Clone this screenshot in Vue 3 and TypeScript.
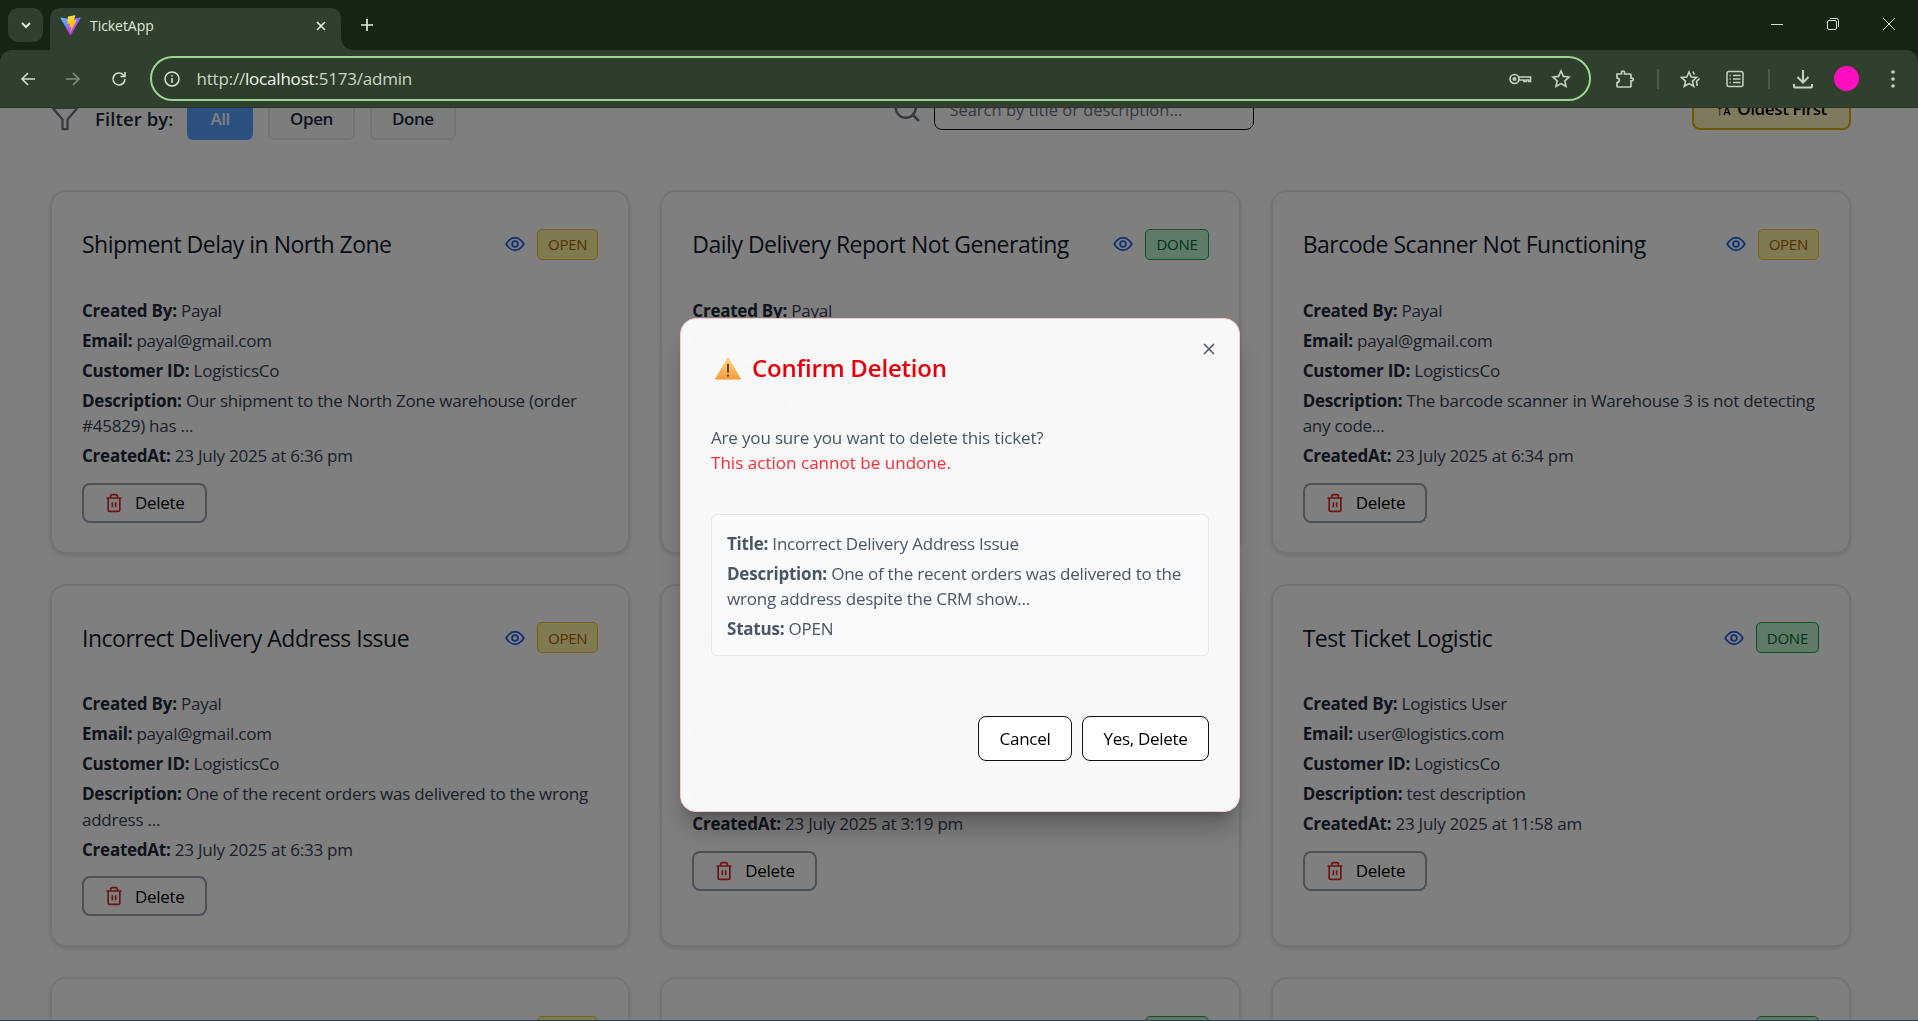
<template>
  <div class="window">
    <header class="chrome">
      <div class="tabstrip">
        <button class="tab-list">
          <svg width="14" height="14" viewBox="0 0 14 14"><path d="M3 5l4 4 4-4" fill="none" stroke="#dfe9da" stroke-width="2" /></svg>
        </button>
        <div class="tab">
          <svg class="favicon" width="21" height="21" viewBox="0 0 410 404">
            <defs>
              <linearGradient id="va" x1="6" y1="33" x2="235" y2="344" gradientUnits="userSpaceOnUse"><stop stop-color="#41D1FF" /><stop offset="1" stop-color="#BD34FE" /></linearGradient>
              <linearGradient id="vb" x1="194" y1="8" x2="236" y2="293" gradientUnits="userSpaceOnUse"><stop stop-color="#FFEA83" /><stop offset=".08" stop-color="#FFDD35" /><stop offset="1" stop-color="#FFA800" /></linearGradient>
            </defs>
            <path d="M399.641 59.5246L215.643 388.545C211.844 395.338 202.084 395.378 198.228 388.618L10.5817 59.5563C6.38087 52.1896 12.6802 43.2665 21.0281 44.7586L205.223 77.6824C206.398 77.8924 207.601 77.8904 208.776 77.6763L389.119 44.8058C397.439 43.2894 403.768 52.1434 399.641 59.5246Z" fill="url(#va)" />
            <path d="M292.965 1.5744L156.801 28.2552C154.563 28.6937 152.906 30.5903 152.771 32.8664L144.395 174.33C144.198 177.662 147.258 180.248 150.51 179.498L188.42 170.749C191.967 169.931 195.172 173.055 194.443 176.622L183.18 231.775C182.422 235.487 185.907 238.661 189.532 237.56L212.947 230.446C216.577 229.344 220.065 232.527 219.297 236.242L201.398 322.875C200.278 328.294 207.486 331.249 210.492 326.603L212.5 323.5L323.454 102.072C325.312 98.3645 322.108 94.137 318.036 94.9228L279.014 102.454C275.347 103.161 272.227 99.746 273.262 96.1583L298.731 7.86689C299.767 4.27314 296.636 0.855181 292.965 1.5744Z" fill="url(#vb)" />
          </svg>
          <span class="tab-title">TicketApp</span>
          <svg class="tab-x" width="12" height="12" viewBox="0 0 12 12"><path d="M2 2l8 8M10 2l-8 8" stroke="#eef3ea" stroke-width="1.6" /></svg>
        </div>
        <svg class="tab-plus" width="14" height="14" viewBox="0 0 14 14"><path d="M7 1v12M1 7h12" stroke="#dfe9da" stroke-width="1.7" /></svg>
        <div class="win-controls">
          <svg width="14" height="14" viewBox="0 0 14 14"><path d="M1 7.5h12" stroke="#d5dfd0" stroke-width="1" /></svg>
          <svg width="14" height="14" viewBox="0 0 14 14" fill="none" stroke="#d5dfd0"><rect x="1.5" y="3.5" width="9" height="9" rx="1.5" /><path d="M4 1.5h6.5a2 2 0 0 1 2 2V10" /></svg>
          <svg width="14" height="14" viewBox="0 0 14 14"><path d="M1 1l12 12M13 1L1 13" stroke="#d5dfd0" stroke-width="1" /></svg>
        </div>
      </div>
      <div class="toolbar">
        <div class="nav-btn"><svg width="18" height="18" viewBox="0 0 18 18" fill="none" stroke="#d3dfce" stroke-width="1.6"><path d="M16 9H3M9 3L3 9l6 6" /></svg></div>
        <div class="nav-btn"><svg width="18" height="18" viewBox="0 0 18 18" fill="none" stroke="#7f8d7b" stroke-width="1.6"><path d="M2 9h13M9 3l6 6-6 6" /></svg></div>
        <div class="nav-btn"><svg width="18" height="18" viewBox="0 0 18 18" fill="none" stroke="#d3dfce" stroke-width="1.6"><path d="M15 9a6 6 0 1 1-1.8-4.3L15 6.5" /><path d="M15 2v4.5h-4.5" /></svg></div>
        <div class="address">
          <svg width="18" height="18" viewBox="0 0 18 18" fill="none" stroke="#dfe9da" stroke-width="1.5"><circle cx="9" cy="9" r="7" /><path d="M9 8v5" /><path d="M9 5v1.4" /></svg>
          <span class="url"><span class="url-dim">http://</span>localhost<span class="url-dim">:5173/admin</span></span>
          <svg class="addr-key" width="24" height="18" viewBox="0 0 24 18" fill="none" stroke="#c5d2c0" stroke-width="1.7"><circle cx="6.5" cy="9" r="4.5" /><circle cx="6.5" cy="9" r="1.2" /><path d="M11 7h11.5v4.5h-2V10h-2.5v1.5h-2V10H11" /></svg>
          <svg class="addr-star" width="20" height="20" viewBox="0 0 20 20" fill="none" stroke="#c5d2c0" stroke-width="1.6"><path d="M10 2l2.4 5.4 5.6.6-4.2 3.8 1.2 5.7L10 14.6l-5 2.9 1.2-5.7L2 8l5.6-.6z" /></svg>
        </div>
        <div class="tool"><svg width="20" height="20" viewBox="0 0 20 20" fill="none" stroke="#c5d2c0" stroke-width="1.7"><path d="M2 5h4.5V3.5a1.5 1.5 0 0 1 3 0V5H15a1 1 0 0 1 1 1v3.2h1a1.3 1.3 0 0 1 0 2.6h-1V17a1 1 0 0 1-1 1H3a1 1 0 0 1-1-1v-3.5c3 0 3-4.5 0-4.5z" /></svg></div>
        <i class="sep"></i>
        <div class="tool"><svg width="22" height="20" viewBox="0 0 22 20" fill="none" stroke="#c5d2c0" stroke-width="1.6"><path d="M9 3l2.2 5 5.3.5-4 3.6 1.2 5.2L9 14.6l-4.7 2.7 1.2-5.2-4-3.6L6.800 8z" /><path d="M13 2.500l1.300 3M19.500 9.500l-3 3 .8 4.500" /></svg></div>
        <div class="tool"><svg width="18" height="18" viewBox="0 0 18 18" fill="none" stroke="#c5d2c0" stroke-width="1.5"><rect x="1" y="1.500" width="16" height="15" rx="2" /><path d="M7 5.500h7.500M7 9h7.500M7 12.500h7.500M3.500 5.500h1.200M3.500 9h1.200M3.500 12.500h1.200" /></svg></div>
        <i class="sep sep-wide"></i>
        <div class="tool"><svg width="22" height="22" viewBox="0 0 22 22" fill="none" stroke="#c5d2c0" stroke-width="2"><path d="M11 2v12M5.500 9l5.500 5.500L16.500 9" /><path d="M2 16v2.500a1 1 0 0 0 1 1h16a1 1 0 0 0 1-1V16" /></svg></div>
        <div class="tool"><span class="avatar"></span></div>
        <div class="tool tool-last"><svg width="6" height="20" viewBox="0 0 6 20" fill="#c5d2c0"><circle cx="3" cy="3" r="1.800" /><circle cx="3" cy="10" r="1.800" /><circle cx="3" cy="17" r="1.800" /></svg></div>
      </div>
    </header>

    <main class="viewport">
      <div class="page">
        <div class="controls">
          <div class="filters">
            <svg class="funnel" width="30" height="30" viewBox="0 0 24 24" fill="none" stroke="#6b7280" stroke-width="1.800" stroke-linejoin="round" stroke-linecap="round"><polygon points="22 3 2 3 10 12.46 10 20 14 20 14 12.46 22 3" /></svg>
            <span class="filter-label">Filter by:</span>
            <button v-for="f in filters" :key="f" class="filter-btn" :class="{ active: f === 'All' }">{{ f }}</button>
          </div>
          <div class="search">
            <svg width="30" height="30" viewBox="0 0 24 24" fill="none" stroke="#6b7280" stroke-width="2" stroke-linecap="round"><circle cx="11" cy="11" r="8" /><path d="M21 21l-4.300-4.300" /></svg>
            <input class="search-input" placeholder="Search by title or description..." />
          </div>
          <button class="sort-btn"><span class="sort-ico">↑<small>A</small></span> Oldest First</button>
        </div>

        <section class="grid">
          <article v-for="t in tickets" :key="t.title" class="card">
            <div class="card-head">
              <h3>{{ t.title }}</h3>
              <div class="card-meta">
                <svg width="20" height="20" viewBox="0 0 24 24" fill="none" stroke="#2563eb" stroke-width="2.200"><path d="M1.500 12S5.500 4.500 12 4.500 22.500 12 22.500 12 18.500 19.500 12 19.500 1.500 12 1.500 12z" /><circle cx="12" cy="12" r="3.500" /></svg>
                <span class="badge" :class="t.status.toLowerCase()">{{ t.status }}</span>
              </div>
            </div>
            <p><b>Created By:</b> {{ t.by }}</p>
            <p><b>Email:</b> {{ t.email }}</p>
            <p><b>Customer ID:</b> {{ t.customer }}</p>
            <p><b>Description:</b> {{ t.desc }}</p>
            <p><b>CreatedAt:</b> {{ t.at }}</p>
            <button class="del-btn">
              <svg width="20" height="20" viewBox="0 0 24 24" fill="none" stroke="#dc2626" stroke-width="2"><path d="M3 6h18M19 6v14a2 2 0 0 1-2 2H7a2 2 0 0 1-2-2V6m3 0V4a2 2 0 0 1 2-2h4a2 2 0 0 1 2 2v2M10 11v6M14 11v6" /></svg>
              Delete
            </button>
          </article>
        </section>
      </div>

      <div class="overlay">
        <div class="modal">
          <svg class="modal-x" width="12" height="12" viewBox="0 0 12 12"><path d="M1 1l10 10M11 1L1 11" stroke="#4a5565" stroke-width="1.500" /></svg>
          <h2 class="modal-title">
            <svg width="26" height="24" viewBox="0 0 26 24">
              <defs><linearGradient id="warn" x1="0" y1="0" x2="0" y2="1"><stop offset="0" stop-color="#ffd98a" /><stop offset="1" stop-color="#f79a3a" /></linearGradient></defs>
              <path d="M13 1.500 25.500 23H.5z" fill="url(#warn)" stroke="url(#warn)" stroke-linejoin="round" />
              <path d="M13 8v8.500M13 18.500v2" stroke="#4b3a2a" stroke-width="1.800" />
            </svg>
            Confirm Deletion
          </h2>
          <p class="modal-text">Are you sure you want to delete this ticket?</p>
          <p class="modal-warn">This action cannot be undone.</p>
          <div class="summary">
            <p><b>Title:</b> Incorrect Delivery Address Issue</p>
            <p><b>Description:</b> One of the recent orders was delivered to the wrong address despite the CRM show...</p>
            <p><b>Status:</b> OPEN</p>
          </div>
          <div class="modal-actions">
            <button class="cancel">Cancel</button>
            <button class="confirm">Yes, Delete</button>
          </div>
        </div>
      </div>
    </main>
    <div class="taskbar-edge"></div>
  </div>
</template>

<script setup lang="ts">
type Ticket = { title: string; status: 'OPEN' | 'DONE'; by: string; email: string; customer: string; desc: string; at: string };

const filters = ['All', 'Open', 'Done'];

const payal = { by: 'Payal', email: 'payal@gmail.com', customer: 'LogisticsCo' };

const tickets: Ticket[] = [
  { title: 'Shipment Delay in North Zone', status: 'OPEN', ...payal, desc: 'Our shipment to the North Zone warehouse (order #45829) has ...', at: '23 July 2025 at 6:36 pm' },
  { title: 'Daily Delivery Report Not Generating', status: 'DONE', ...payal, desc: 'The daily delivery report has not been generated since the last ...', at: '23 July 2025 at 6:35 pm' },
  { title: 'Barcode Scanner Not Functioning', status: 'OPEN', ...payal, desc: 'The barcode scanner in Warehouse 3 is not detecting any code...', at: '23 July 2025 at 6:34 pm' },
  { title: 'Incorrect Delivery Address Issue', status: 'OPEN', ...payal, desc: 'One of the recent orders was delivered to the wrong address ...', at: '23 July 2025 at 6:33 pm' },
  { title: 'Logistics Ticket', status: 'DONE', by: 'Logistics User', email: 'user@logistics.com', customer: 'LogisticsCo', desc: 'test ticket', at: '23 July 2025 at 3:19 pm' },
  { title: 'Test Ticket Logistic', status: 'DONE', by: 'Logistics User', email: 'user@logistics.com', customer: 'LogisticsCo', desc: 'test description', at: '23 July 2025 at 11:58 am' },
  { title: 'Ticket 7', status: 'OPEN', ...payal, desc: 'test', at: '22 July 2025 at 6:30 pm' },
  { title: 'Ticket 8', status: 'DONE', ...payal, desc: 'test', at: '22 July 2025 at 6:20 pm' },
  { title: 'Ticket 9', status: 'DONE', ...payal, desc: 'test', at: '22 July 2025 at 6:10 pm' },
];
</script>

<style>
html, body { margin: 0; height: 100%; overflow: hidden; }
</style>

<style scoped>
* { box-sizing: border-box; }
.window { width: 1918px; height: 1021px; display: flex; flex-direction: column; overflow: hidden; font-family: "Open Sans", "Noto Sans", sans-serif; background: #fff; position: relative; }
button { font-family: inherit; cursor: pointer; }
p { margin: 0; }

.chrome { flex: none; background: #162413; position: relative; z-index: 5; }
.tabstrip { height: 50px; display: flex; align-items: flex-start; padding: 8px 0 0 8px; }
.tab-list { width: 35px; height: 34px; border: 0; border-radius: 10px; background: #313f2f; display: flex; align-items: center; justify-content: center; padding: 0; }
.tab { width: 291px; height: 42px; margin-left: 7px; background: #313f2f; border-radius: 10px 10px 0 0; display: flex; align-items: center; padding: 0 14px 7px 10px; position: relative; }
.tab::after { content: ""; position: absolute; right: -12px; bottom: 0; width: 12px; height: 12px; background: radial-gradient(circle at 100% 0, #162413 11.500px, #313f2f 12px); }
.favicon { flex: none; }
.tab-title { margin-left: 9px; flex: 1; color: #dfe9da; font-size: 14px; letter-spacing: -0.05px; }
.tab-plus { margin: 10px 0 0 19px; }
.win-controls { margin-left: auto; display: flex; gap: 42px; padding: 9px 22px 0 0; }
.toolbar { height: 58px; background: #313f2f; border-radius: 12px 12px 0 0; display: flex; align-items: center; padding: 0 3px 0 5px; border-bottom: 1px solid #2b3829; }
.nav-btn { width: 45.500px; display: flex; justify-content: center; flex: none; }
.address { flex: 1; height: 45px; margin: 0 11.500px 0 8px; border: 2.500px solid #9dd58f; border-radius: 23px; background: #2f3d2d; display: flex; align-items: center; padding: 0 18px 0 11px; }
.url { margin-left: 16px; flex: 1; color: #f1f6ee; font-size: 17px; letter-spacing: -0.2px; }
.url-dim { color: #c9d6c4; }
.addr-key { margin-right: 19px; }
.tool { width: 44px; flex: none; display: flex; justify-content: center; align-items: center; }
.tool-last { margin-left: 2.500px; }
.sep { width: 2px; height: 20px; background: #4b5a48; margin: 0 10px; flex: none; }
.sep-wide { margin: 0 11px; }
.avatar { width: 25px; height: 25px; border-radius: 50%; background: #ff0fbf; }

.viewport { flex: 1; min-height: 0; position: relative; overflow: hidden; }
.page { margin-top: -18px; padding: 0 67px 0 50px; color: #1f2937; }
.controls { display: flex; justify-content: space-between; align-items: flex-start; height: 50px; margin-bottom: 50px; }
.filters { display: flex; align-items: center; padding-top: 8px; }
.funnel { margin-right: 15px; }
.filter-label { font-size: 18.500px; font-weight: 600; color: #1e2939; letter-spacing: 0.1px; margin-right: 14px; position: relative; top: -1px; }
.filter-btn { height: 42px; margin-right: 15px; padding: 0 20px; border: 2px solid #e5e7eb; border-radius: 6px; background: #f9fafb; color: #1e2939; font-size: 17px; font-weight: 600; letter-spacing: -0.4px; line-height: 36px; }
.filter-btn.active { background: #55a0ff; border-color: #55a0ff; color: #fff; padding: 0 21px; }
.search { display: flex; align-items: center; gap: 12px; height: 40px; margin: -1px 16px 0 0; }
.search-input { width: 320px; height: 41px; border: 1.500px solid #000; border-radius: 8px; padding: 0 14px; font: 16.500px "Open Sans", sans-serif; letter-spacing: 0; background: transparent; }
.search-input::placeholder { color: #6b7280; }
.sort-btn { width: 159px; height: 40px; background: #fff4bc; border: 2px solid #dfb000; border-radius: 8px; font-size: 17px; font-weight: 600; color: #000; letter-spacing: -0.35px; padding: 0 0 3px; }
.sort-ico { font-size: 15px; margin-right: 3px; }
.sort-ico small { font-size: 11px; }

.grid { display: grid; grid-template-columns: repeat(3, 1fr); gap: 30px; }
.card { min-height: 362px; border: 2px solid #e5e7eb; border-radius: 16px; background: #fff; padding: 30px 30px 29px; box-shadow: 0 2px 4px rgba(0,0,0,.12); }
.card-head { display: flex; justify-content: space-between; align-items: center; height: 46px; margin: -1px 0 30.500px; }
.card-head h3 { margin: 0; font-size: 23px; font-weight: 500; letter-spacing: -0.5px; color: #101828; white-space: nowrap; }
.card-meta { display: flex; align-items: center; gap: 12px; }
.badge { height: 31px; padding: 0 10px; border: 1px solid; border-radius: 5px; font-size: 15px; font-weight: 500; letter-spacing: -0.25px; display: flex; align-items: center; }
.badge.open { background: #fff5a0; border-color: #f0c020; color: #a65f00; }
.badge.done { background: #c0f5d4; border-color: #16a34a; color: #016630; }
.card p { font-size: 17px; line-height: 25.500px; margin-bottom: 4.500px; color: #364153; letter-spacing: -0.24px; }
.card p b { font-weight: 700; color: #1e2939; }
.del-btn { display: flex; align-items: center; gap: 11px; height: 40px; margin-top: 14px; padding: 0 20px; border: 2px solid #99a1af; border-radius: 8px; background: #fff; color: #000; font-size: 17px; font-weight: 500; letter-spacing: -0.3px; }

.overlay { position: absolute; inset: 0; padding-left: 2px; background: rgba(0,0,0,.5); display: flex; align-items: center; justify-content: center; }
.modal { position: relative; width: 560px; height: 494px; padding: 30px; background: rgba(255,255,255,.95); backdrop-filter: blur(8px); border: 1px solid #ffc9c9; border-radius: 16px; box-shadow: 0 20px 25px -5px rgba(0,0,0,.25), 0 8px 10px -6px rgba(0,0,0,.2); display: flex; flex-direction: column; }
.modal-x { position: absolute; top: 24px; right: 24px; }
.modal-title { margin: -1px 0 37px; display: flex; align-items: center; gap: 11px; padding: 0 0 0 4px; font-size: 24px; line-height: 40px; font-weight: 600; color: #e7000b; letter-spacing: -0.2px; }
.modal-text { font-size: 17px; line-height: 25px; color: #4a5565; letter-spacing: -0.17px; }
.modal-warn { font-size: 17px; line-height: 25px; color: #fb2c36; font-weight: 500; letter-spacing: 0.03px; }
.summary { margin-top: 39px; height: 142px; padding: 16px 15px; border: 1px solid #e5e7eb; border-radius: 6px; background: #f9fafb; color: #4a5565; }
.summary p { font-size: 17px; line-height: 25.500px; margin-bottom: 4.500px; letter-spacing: -0.22px; }
.summary b { font-weight: 700; }
.modal-actions { margin-top: auto; margin-bottom: 20px; display: flex; justify-content: flex-end; gap: 10px; }
.modal-actions button { height: 45px; padding: 0; border: 1.500px solid #111; border-radius: 8px; background: #fff; color: #000; font-size: 17px; font-weight: 500; letter-spacing: -0.3px; }
.modal-actions .cancel { width: 94px; }
.modal-actions .confirm { width: 127px; }
.taskbar-edge { position: absolute; left: 0; right: 0; bottom: 0; height: 1px; background: #28405f; z-index: 6; }
</style>
